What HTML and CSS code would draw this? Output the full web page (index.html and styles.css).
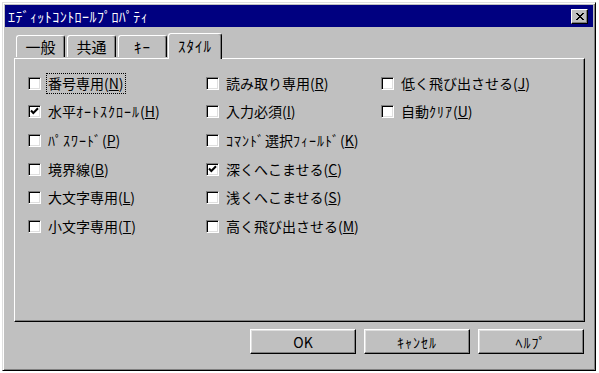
FILE: index.html
```html
<!DOCTYPE html>
<html lang="ja">

<head>
    <meta charset="UTF-8">
    <meta name="viewport" content="width=device-width, initial-scale=1.0">
    <title>エディットコントロールプロパティ</title>
    <link rel="stylesheet" href="styles.css">
</head>

<body>
    <div class="window">
        <!-- Title bar -->
        <div class="titlebar">
            <span class="title">ｴﾃﾞｨｯﾄｺﾝﾄﾛｰﾙﾌﾟﾛﾊﾟﾃｨ</span>
            <button class="close" type="button" aria-label="close">
                <svg width="8" height="7" viewBox="0 0 8 7" shape-rendering="crispEdges">
                    <path d="M0 0h2v1h-2z M6 0h2v1h-2z M1 1h2v1h-2z M5 1h2v1h-2z M2 2h4v1h-4z M3 3h2v1h-2z M2 4h4v1h-4z M1 5h2v1h-2z M5 5h2v1h-2z M0 6h2v1h-2z M6 6h2v1h-2z" fill="#000"/>
                </svg>
            </button>
        </div>

        <div class="content">
            <!-- Tabs -->
            <div class="tabs">
                <div class="tab">一般</div>
                <div class="tab">共通</div>
                <div class="tab"><span class="hk">ｷｰ</span></div>
                <div class="tab active"><span class="hk">ｽﾀｲﾙ</span></div>
            </div>

            <!-- Style page -->
            <div class="panel">
                <div class="options">
                    <label class="opt"><span class="box"></span><span class="txt focus">番号専用(<u>N</u>)</span></label>
                    <label class="opt"><span class="box checked"></span><span class="txt">水平<span class="hk">ｵｰﾄｽｸﾛｰﾙ</span>(<u>H</u>)</span></label>
                    <label class="opt"><span class="box"></span><span class="txt"><span class="hk">ﾊﾟｽﾜｰﾄﾞ</span>(<u>P</u>)</span></label>
                    <label class="opt"><span class="box"></span><span class="txt">境界線(<u>B</u>)</span></label>
                    <label class="opt"><span class="box"></span><span class="txt">大文字専用(<u>L</u>)</span></label>
                    <label class="opt"><span class="box"></span><span class="txt">小文字専用(<u>T</u>)</span></label>

                    <label class="opt"><span class="box"></span><span class="txt">読み取り専用(<u>R</u>)</span></label>
                    <label class="opt"><span class="box"></span><span class="txt">入力必須(<u>I</u>)</span></label>
                    <label class="opt"><span class="box"></span><span class="txt"><span class="hk">ｺﾏﾝﾄﾞ</span>選択<span class="hk">ﾌｨｰﾙﾄﾞ</span>(<u>K</u>)</span></label>
                    <label class="opt"><span class="box checked"></span><span class="txt">深くへこませる(<u>C</u>)</span></label>
                    <label class="opt"><span class="box"></span><span class="txt">浅くへこませる(<u>S</u>)</span></label>
                    <label class="opt"><span class="box"></span><span class="txt">高く飛び出させる(<u>M</u>)</span></label>

                    <label class="opt"><span class="box"></span><span class="txt">低く飛び出させる(<u>J</u>)</span></label>
                    <label class="opt"><span class="box"></span><span class="txt">自動<span class="hk">ｸﾘｱ</span>(<u>U</u>)</span></label>
                </div>
            </div>

            <!-- Buttons -->
            <div class="buttons">
                <button class="btn" type="button">OK</button>
                <button class="btn" type="button"><span class="hk">ｷｬﾝｾﾙ</span></button>
                <button class="btn" type="button"><span class="hk">ﾍﾙﾌﾟ</span></button>
            </div>
        </div>
    </div>
</body>

</html>
```

FILE: styles.css
```css
html,
body {
    margin: 0;
    background: #ffffff;
}

body {
    padding: 2px 0 0 2px;
    font-family: "Noto Sans CJK JP", "DejaVu Sans", sans-serif;
    font-size: 14px;
    color: #000;
}

.window {
    width: 594px;
    height: 369px;
    box-sizing: border-box;
    background: #c0c0c0;
    border-top: 1px solid #dfdfdf;
    border-left: 1px solid #dfdfdf;
    border-right: 1px solid #000;
    border-bottom: 1px solid #000;
    box-shadow: inset 1px 1px 0 #fff, inset -1px -1px 0 #808080;
    padding: 2px;
    display: flex;
    flex-direction: column;
}

.titlebar {
    height: 22px;
    background: #000080;
    display: flex;
    align-items: center;
    justify-content: space-between;
    padding: 0 5px 0 3px;
}

.title {
    color: #fff;
    font-size: 14px;
    line-height: 22px;
    letter-spacing: 0.45px;
}

/* half-width katakana are narrow in Noto, open them up a little */
.hk {
    letter-spacing: 1px;
}

.close {
    width: 17px;
    height: 15px;
    padding: 0;
    margin: 0;
    background: #c0c0c0;
    border-top: 1px solid #fff;
    border-left: 1px solid #fff;
    border-right: 1px solid #000;
    border-bottom: 1px solid #000;
    box-shadow: inset -1px -1px 0 #808080;
    display: flex;
    align-items: center;
    justify-content: center;
}

.content {
    padding: 6px 8px 0 9px;
    display: flex;
    flex-direction: column;
}

.tabs {
    display: flex;
    align-items: flex-end;
    height: 25px;
    padding-left: 2px;
    position: relative;
    z-index: 1;
}

.tab {
    height: 22px;
    box-sizing: border-box;
    padding: 0 8px;
    margin-right: 2px;
    display: flex;
    align-items: center;
    justify-content: center;
    border-top: 1px solid #fff;
    border-left: 1px solid #fff;
    border-right: 1px solid #000;
    border-radius: 3px 3px 0 0;
    box-shadow: inset -1px 0 0 #808080;
    font-size: 15px;
}

.tab:nth-child(1),
.tab:nth-child(2),
.tab:nth-child(3) {
    width: 49px;
    margin-bottom: 1px;
}

.tab.active {
    width: 54px;
    height: 26px;
    margin-left: -1px;
    margin-bottom: -1px;
    background: #c0c0c0;
    padding-bottom: 3px;
}

.panel {
    height: 264px;
    box-sizing: border-box;
    border-top: 1px solid #fff;
    border-left: 1px solid #fff;
    border-right: 1px solid #000;
    border-bottom: 1px solid #000;
    box-shadow: inset -1px -1px 0 #808080;
    padding: 10px 0 0 13px;
}

.options {
    display: grid;
    grid-template-columns: 178px 175px 175px;
    grid-template-rows: repeat(6, 28.6px);
    grid-auto-flow: column;
}

.opt {
    display: flex;
    align-items: center;
    gap: 5px;
    white-space: nowrap;
}

.box {
    width: 13px;
    height: 13px;
    box-sizing: border-box;
    background: #fff;
    border-top: 1px solid #808080;
    border-left: 1px solid #808080;
    border-right: 1px solid #fff;
    border-bottom: 1px solid #fff;
    box-shadow: inset 1px 1px 0 #000, inset -1px -1px 0 #dfdfdf;
    flex: none;
}

.box.checked {
    background: #fff url("data:image/svg+xml,%3Csvg xmlns='http://www.w3.org/2000/svg' width='11' height='11' viewBox='0 0 11 11'%3E%3Cpath d='M2 4.5 L4.3 7 L9 2.2' fill='none' stroke='%23000' stroke-width='2'/%3E%3C/svg%3E") no-repeat center;
}

.txt {
    padding: 1px 1px;
    border: 1px dotted transparent;
    line-height: 17px;
}

.txt.focus {
    border-color: #000;
}

.buttons {
    display: flex;
    justify-content: flex-end;
    gap: 8px;
    margin-top: 7px;
    padding-right: 1px;
}

.btn {
    width: 106px;
    height: 25px;
    margin: 0;
    padding: 0;
    font-family: "Noto Sans CJK JP", "DejaVu Sans", sans-serif;
    font-size: 14px;
    color: #000;
    background: #c0c0c0;
    border-top: 1px solid #fff;
    border-left: 1px solid #fff;
    border-right: 1px solid #000;
    border-bottom: 1px solid #000;
    box-shadow: inset -1px -1px 0 #808080, inset 1px 1px 0 #dfdfdf;
}
```
